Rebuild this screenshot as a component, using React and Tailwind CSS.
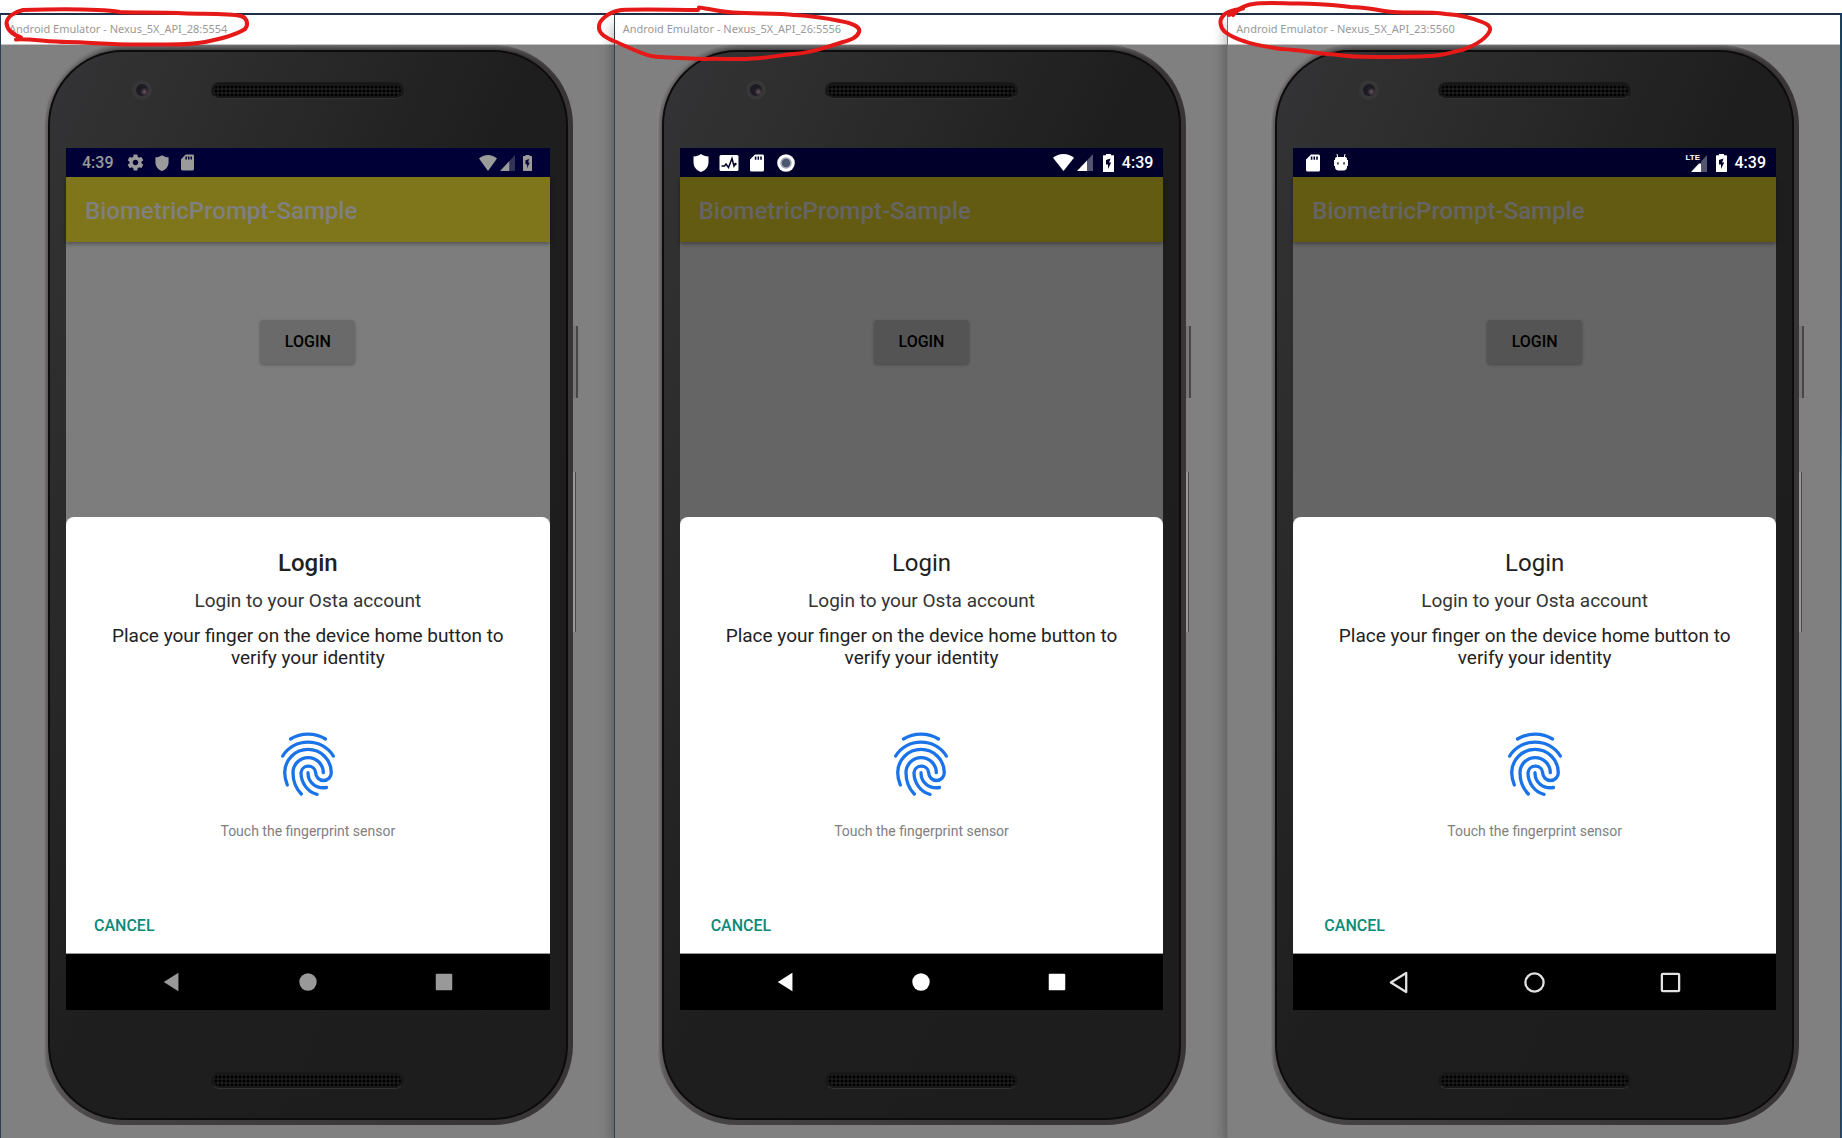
import React from "react";

function Gear() {
  return (
    <svg viewBox="0 0 24 24" className="size-[19px]" fill="currentColor" aria-hidden="true">
      <path d="M19.43 12.98c.04-.32.07-.64.07-.98s-.03-.66-.07-.98l2.11-1.65c.19-.15.24-.42.12-.64l-2-3.46c-.12-.22-.39-.3-.61-.22l-2.49 1c-.52-.4-1.08-.73-1.69-.98l-.38-2.65A.488.488 0 0 0 14 2h-4c-.25 0-.46.18-.49.42l-.38 2.65c-.61.25-1.17.59-1.69.98l-2.49-1c-.23-.09-.49 0-.61.22l-2 3.46c-.13.22-.07.49.12.64l2.11 1.65c-.04.32-.07.65-.07.98s.03.66.07.98l-2.11 1.65c-.19.15-.24.42-.12.64l2 3.46c.12.22.39.3.61.22l2.49-1c.52.4 1.08.73 1.69.98l.38 2.65c.03.24.24.42.49.42h4c.25 0 .46-.18.49-.42l.38-2.65c.61-.25 1.17-.59 1.69-.98l2.49 1c.23.09.49 0 .61-.22l2-3.46c.12-.22.07-.49-.12-.64l-2.11-1.65zM12 15.5c-1.93 0-3.5-1.57-3.5-3.5s1.57-3.5 3.5-3.5 3.5 1.57 3.5 3.5-1.57 3.5-3.5 3.5z" />
    </svg>
  );
}

function Shield({ small }) {
  return (
    <svg viewBox="0 0 16 18" className={small ? "h-4 w-3.5" : "h-[18px] w-4"} fill="currentColor" aria-hidden="true">
      <path d="M8 0C10 1.500 12.500 2.300 15.500 2.500V8c0 4.800-3 8.500-7.500 10C3.500 16.500.5 12.800.5 8V2.500C3.500 2.300 6 1.500 8 0Z" />
    </svg>
  );
}

function SdCard({ small }) {
  return (
    <svg viewBox="0 0 14 18" className={small ? "h-[17px] w-[13px]" : "h-[18px] w-3.5"} fill="currentColor" aria-hidden="true">
      <path fillRule="evenodd" d="M5 .5h7.500A1.500 1.500 0 0 1 14 2v14a1.500 1.500 0 0 1-1.500 1.500h-11A1.500 1.500 0 0 1 0 16V5.500ZM4.800 2.500v3.200h1.600V2.500Zm2.700 0v3.200h1.600V2.500Zm2.700 0v3.200h1.600V2.500Z" />
    </svg>
  );
}

function Monitor() {
  return (
    <svg viewBox="0 0 20 18" className="h-[18px] w-5" aria-hidden="true">
      <rect x=".5" y="1" width="19" height="16" rx="1.500" fill="currentColor" />
      <path d="M2.500 12h3l1.500-2 2.500 3.500 3.500-9 2 7.500 1.500-2.500" fill="none" stroke="#00002b" strokeWidth="1.500" />
      <circle cx="16.500" cy="10" r="1.200" fill="#00002b" />
    </svg>
  );
}

function Ring() {
  return (
    <svg viewBox="0 0 18 18" className="size-[18px]" aria-hidden="true">
      <circle cx="9" cy="9" r="8.800" fill="currentColor" />
      <circle cx="9" cy="9" r="5" fill="#4a566e" stroke="#a2a8b8" strokeWidth="1.500" />
    </svg>
  );
}

function Droid() {
  return (
    <svg viewBox="0 0 14 18" className="h-[18px] w-3.5" fill="currentColor" aria-hidden="true">
      <path d="M3 0 3.800 4M11 0 10.200 4" stroke="currentColor" strokeWidth="1" />
      <path fillRule="evenodd" d="M2 3h10l1 1.500V6h1v6h-1v1.500A3.500 3.500 0 0 1 9.500 16.500h-5A3.500 3.500 0 0 1 1 13.500V12H0V6h1V4.500Zm1.300 5.200v2.300h1.300V8.200Zm6.100 0v2.300h1.300V8.200Z" />
    </svg>
  );
}

function Wifi({ small }) {
  return (
    <svg viewBox="0 0 20 16" className={small ? "h-4 w-[18px]" : "h-[17px] w-[21px]"} preserveAspectRatio="none" fill="currentColor" aria-hidden="true">
      <path d="M0 3.500C2.800 1.300 6.200 0 10 0s7.200 1.300 10 3.500L10 16Z" />
    </svg>
  );
}

function Signal({ small }) {
  return (
    <svg viewBox="0 0 16 16" className={small ? "h-4 w-[15px]" : "h-[17px] w-4"} preserveAspectRatio="none" fill="currentColor" aria-hidden="true">
      <path d="M16 0v16H10V6Z" opacity=".33" />
      <path d="M10 6v10H0Z" />
    </svg>
  );
}

function LteSignal() {
  return (
    <span className="relative block h-[18px] w-[21px]">
      <span className="absolute top-0 left-0 font-['Liberation_Sans'] text-[8px] leading-[8px] font-bold">LTE</span>
      <svg viewBox="0 0 16 16" className="absolute right-0 bottom-0 h-[17px] w-4" preserveAspectRatio="none" fill="currentColor" aria-hidden="true">
        <path d="M16 0v16H10V6Z" opacity=".33" />
        <path d="M10 8v8H0l8-8Z" />
      </svg>
    </span>
  );
}

function Battery({ small }) {
  return (
    <svg viewBox="0 0 11 18" className={small ? "h-4 w-[9px]" : "h-[18px] w-[11px]"} preserveAspectRatio="none" fill="currentColor" aria-hidden="true">
      <path fillRule="evenodd" d="M3 0h5v1.200h2.500a.5.5 0 0 1 .5.5V17.500a.5.5 0 0 1-.5.5h-10a.5.5 0 0 1-.5-.5V1.700a.5.5 0 0 1 .5-.5H3ZM7.500 4.500 3 6v4.500h2V15l3.200-6.500h-2Z" />
    </svg>
  );
}

function Fingerprint() {
  return (
    <svg viewBox="0 0 54 64" className="h-16 w-[54px]" fill="none" stroke="#1a73e8" strokeWidth="3.300" strokeLinecap="round" aria-hidden="true">
      <path d="M9.500 7C20 .5 34 .5 44.500 7" />
      <path d="M1.700 24C12.500 5.500 41.500 5.500 52.300 24" />
      <path d="M6.300 53C4.800 49 3.700 45 3.700 40.700A23.300 23.300 0 0 1 50.300 40.700A7.800 7.800 0 0 1 34.700 40.700A7.400 7.400 0 0 0 20 40.700C20 50 26 60 36 62.300" />
      <path d="M20.300 62C14.500 56 12 48 12 40.700A15.100 15.100 0 0 1 42.300 40.700" />
      <path d="M27 40.700C27 50 34.500 57.200 45.500 55.500" />
    </svg>
  );
}

function NavIcon({ kind, outline }) {
  const shapes = {
    Back: <path d="M3 12 19 2v20Z" />,
    Home: <circle cx="12" cy="12" r="9.500" />,
    Overview: <rect x="3" y="3" width="18" height="18" rx="1" />,
  };
  return (
    <svg
      viewBox="0 0 24 24"
      className={outline ? "size-[23px]" : "size-[22px]"}
      fill={outline ? "none" : "currentColor"}
      stroke={outline ? "currentColor" : "none"}
      strokeWidth="2.400"
      strokeLinejoin="round"
      aria-hidden="true"
    >
      {shapes[kind]}
    </svg>
  );
}

function Speaker() {
  return (
    <div className="h-[17px] w-[193px] rounded-full border border-[#1a1a1a] border-b-[#333] bg-[#171717] p-0.5">
      <div className="h-full rounded-full bg-[radial-gradient(circle,#000_1px,#1d1d1d_2px)] bg-[size:4px_4px]" />
    </div>
  );
}

const devices = [
  {
    title: "Android Emulator - Nexus_5X_API_28:5554",
    dim: true,
    edge: "border-l-[#2b3f55]",
    left: (
      <>
        <span className="mr-3">4:39</span>
        <Gear />
        <span className="w-2.5" />
        <Shield small />
        <span className="w-3" />
        <SdCard small />
      </>
    ),
    right: (
      <>
        <Wifi small />
        <span className="w-[3px]" />
        <Signal small />
        <span className="w-2" />
        <Battery small />
      </>
    ),
    ink: "M16 39.500C30 38.500 48 42 67 42C90 42 110 45 143 44.500C165 44 185 46 205 42C220 39 236 35 245 29C249 24 247 18 241 16C230 13 205 14 187 13.500C150 12 135 13 120 12C100 9 60 9 23 10C14 12 7 17 6.500 23C7 30 14 35 21 37.500",
  },
  {
    title: "Android Emulator - Nexus_5X_API_26:5556",
    edge: "border-l-[#2b3f55]",
    left: (
      <>
        <Shield />
        <span className="w-2.5" />
        <Monitor />
        <span className="w-[11px]" />
        <SdCard />
        <span className="w-[13px]" />
        <Ring />
      </>
    ),
    right: (
      <>
        <Wifi />
        <span className="w-[3px]" />
        <Signal />
        <span className="w-2.5" />
        <Battery />
        <span className="ml-2">4:39</span>
      </>
    ),
    ink: "M85 7.500C98 9 105 12 119 12.500C140 14 165 13 180 15C198 16 212 18 226 21C238 23 247 27 245 32C243 38 236 40 229 42C212 47 200 53 180 54C165 55 155 58 139 58.500C120 60 105 58 90 59C70 58 50 58 37 56C25 53 12 46 1 41.500C-8 38-15 34-15 28C-16 20-5 12 7 10C30 9 60 10 84 10",
  },
  {
    title: "Android Emulator - Nexus_5X_API_23:5560",
    edge: "border-l-[#777]",
    left: (
      <>
        <SdCard />
        <span className="w-3.5" />
        <Droid />
      </>
    ),
    right: (
      <>
        <LteSignal />
        <span className="w-[9px]" />
        <Battery />
        <span className="ml-2">4:39</span>
      </>
    ),
    outline: true,
    ink: "M6 15C9 11 12 9 16 8.500C6 10-2 12-4 16C-8 20-7 27-2.500 31.500C3 36 10 39 18 41.500C30 46 42 47 55 49C75 50 92 54 108 54.500C122 57 135 57 149 57C170 57 185 57 202 56C215 56 225 52 235 50C250 45 261 37 263 30C264 26 260 24 255 22C243 17 232 15 219 14C195 11 180 14 161 11.500C148 10 140 7 124 7C105 5 90 3 67 3.500C50 3 38 2 26 4C16 5 9 11 2 15",
  },
];

function Device({ device, last }) {
  const { dim, outline } = device;
  return (
    <section
      className={`relative flex flex-col border-t-2 border-t-[#1f2f45] border-l shadow-[-6px_8px_12px_-4px_rgba(0,0,0,0.3)] ${device.edge} ${last ? "border-r border-r-[#2b3f55]" : ""}`}
    >
      <h2 className="flex h-[30px] items-center border-b border-[#c4c4c4] bg-white pl-2 font-['Noto_Sans',sans-serif] text-[11px] text-[#999]">
        {device.title}
      </h2>

      <div className="flex-1 bg-[#808080] pr-[41px] pb-3.5 pl-[42px]">
        <div className="relative rounded-[80px] bg-[linear-gradient(90deg,#6f6c6c_0px,#5c5959_4px,#444242_60px,#3a3738_70%,#393536_100%)] p-[5px] shadow-[inset_4px_5px_5px_-3px_rgba(200,200,200,0.45)]">
          <span className="absolute top-[281px] -right-[5px] h-[72px] w-[5px] border-r-2 border-[#474545] bg-[#767676]" />
          <span className="absolute top-[427px] -right-[3px] h-[160px] w-[3px] border-r border-[#4a4a4a] bg-[#999]" />
          <div className="rounded-[75px] bg-[#0c0c0c] p-0.5">
            <div className="rounded-[73px] bg-[linear-gradient(115deg,#343436_0%,#2b2b2b_22%,#1e1e1e_48%,#1d1d1d_100%)] pr-4 pb-[29px] pl-4">
              <div className="relative flex h-24 items-start justify-center pt-[30px]">
                <span className="absolute top-[28px] left-[66px] flex size-5 items-center justify-center rounded-full bg-[#373738]">
                  <span className="size-3 rounded-full bg-[radial-gradient(circle_at_70%_65%,#6b5560_0%,#1f1b24_35%,#1a1820_100%)]" />
                </span>
                <Speaker />
              </div>

              <div className={dim ? "bg-[#7d7d7d]" : "bg-[#656565]"}>
                <div
                  className={`flex h-[29px] items-center justify-between text-base font-medium ${
                    dim ? "bg-[#000036] pr-[18px] pl-4 text-[#9b9b9b]" : "bg-[#00002b] pr-2.5 pl-[13px] text-white"
                  }`}
                >
                  <div className="flex items-center">{device.left}</div>
                  <div className="flex items-center">{device.right}</div>
                </div>
                <h1
                  className={`flex h-[65px] items-center pt-0.5 pl-[19px] text-2xl font-medium shadow-[0_2px_4px_rgba(0,0,0,0.35)] ${
                    dim ? "bg-[#7f751b] text-[#808080]" : "bg-[#645b13] text-[#656565]"
                  }`}
                >
                  BiometricPrompt-Sample
                </h1>

                <div className="flex h-[275px] items-start justify-center pt-[78px]">
                  <button
                    type="button"
                    className={`h-11 w-[95px] rounded-sm text-base font-medium text-black shadow-[0_1px_3px_rgba(0,0,0,0.3)] ${
                      dim ? "bg-[#6a6a6a]" : "bg-[#545454]"
                    }`}
                  >
                    LOGIN
                  </button>
                </div>

                <div className="flex flex-col items-center rounded-t-lg border-b border-[#999] bg-white px-10 pt-8 pb-[17px] text-center">
                  <h3 className={`text-2xl leading-7 text-[#212121] ${dim ? "font-medium" : ""}`}>Login</h3>
                  <p className="mt-[13px] text-[19px] leading-[22px] text-[#333]">Login to your Osta account</p>
                  <p className="mt-[13px] text-[19px] leading-[22px] text-[#222]">
                    Place your finger on the device home button to verify your identity
                  </p>
                  <div className="mt-[63px]">
                    <Fingerprint />
                  </div>
                  <p className="mt-[25px] text-sm text-[#808080]">Touch the fingerprint sensor</p>
                  <button
                    type="button"
                    className={`mt-[75px] self-start text-base leading-5 font-medium text-[#0b8a78] ${dim ? "-ml-3" : "-ml-[9px]"}`}
                  >
                    CANCEL
                  </button>
                </div>

                <nav className={`grid h-14 grid-cols-3 bg-black px-[38px] ${dim ? "text-[#999]" : outline ? "text-[#e2e2e2]" : "text-white"}`}>
                  {["Back", "Home", "Overview"].map((kind) => (
                    <button key={kind} type="button" aria-label={kind} className="flex items-center justify-center">
                      <NavIcon kind={kind} outline={outline} />
                    </button>
                  ))}
                </nav>
              </div>

              <div className="flex justify-center pt-[62px]">
                <Speaker />
              </div>
            </div>
          </div>
        </div>
      </div>

      <svg
        viewBox="0 0 300 80"
        className="pointer-events-none absolute -top-[15px] -left-px h-20 w-[300px] overflow-visible"
        fill="none"
        stroke="#e61919"
        strokeWidth="4"
        strokeLinecap="round"
        strokeLinejoin="round"
        aria-hidden="true"
      >
        <path d={device.ink} />
      </svg>
    </section>
  );
}

export default function App() {
  return (
    <main className="flex min-h-screen bg-white pt-[13px] font-[Roboto,sans-serif]">
      <div className="grid flex-1 grid-cols-3">
        {devices.map((device, i) => (
          <Device key={device.title} device={device} last={i === devices.length - 1} />
        ))}
      </div>
      <div className="w-px bg-[linear-gradient(#0a3a78_0%,#0d63b0_35%,#2aa5d6_42%,#3db4e0_60%,#0f6fb5_75%,#0a5aa0_100%)]" />
    </main>
  );
}
